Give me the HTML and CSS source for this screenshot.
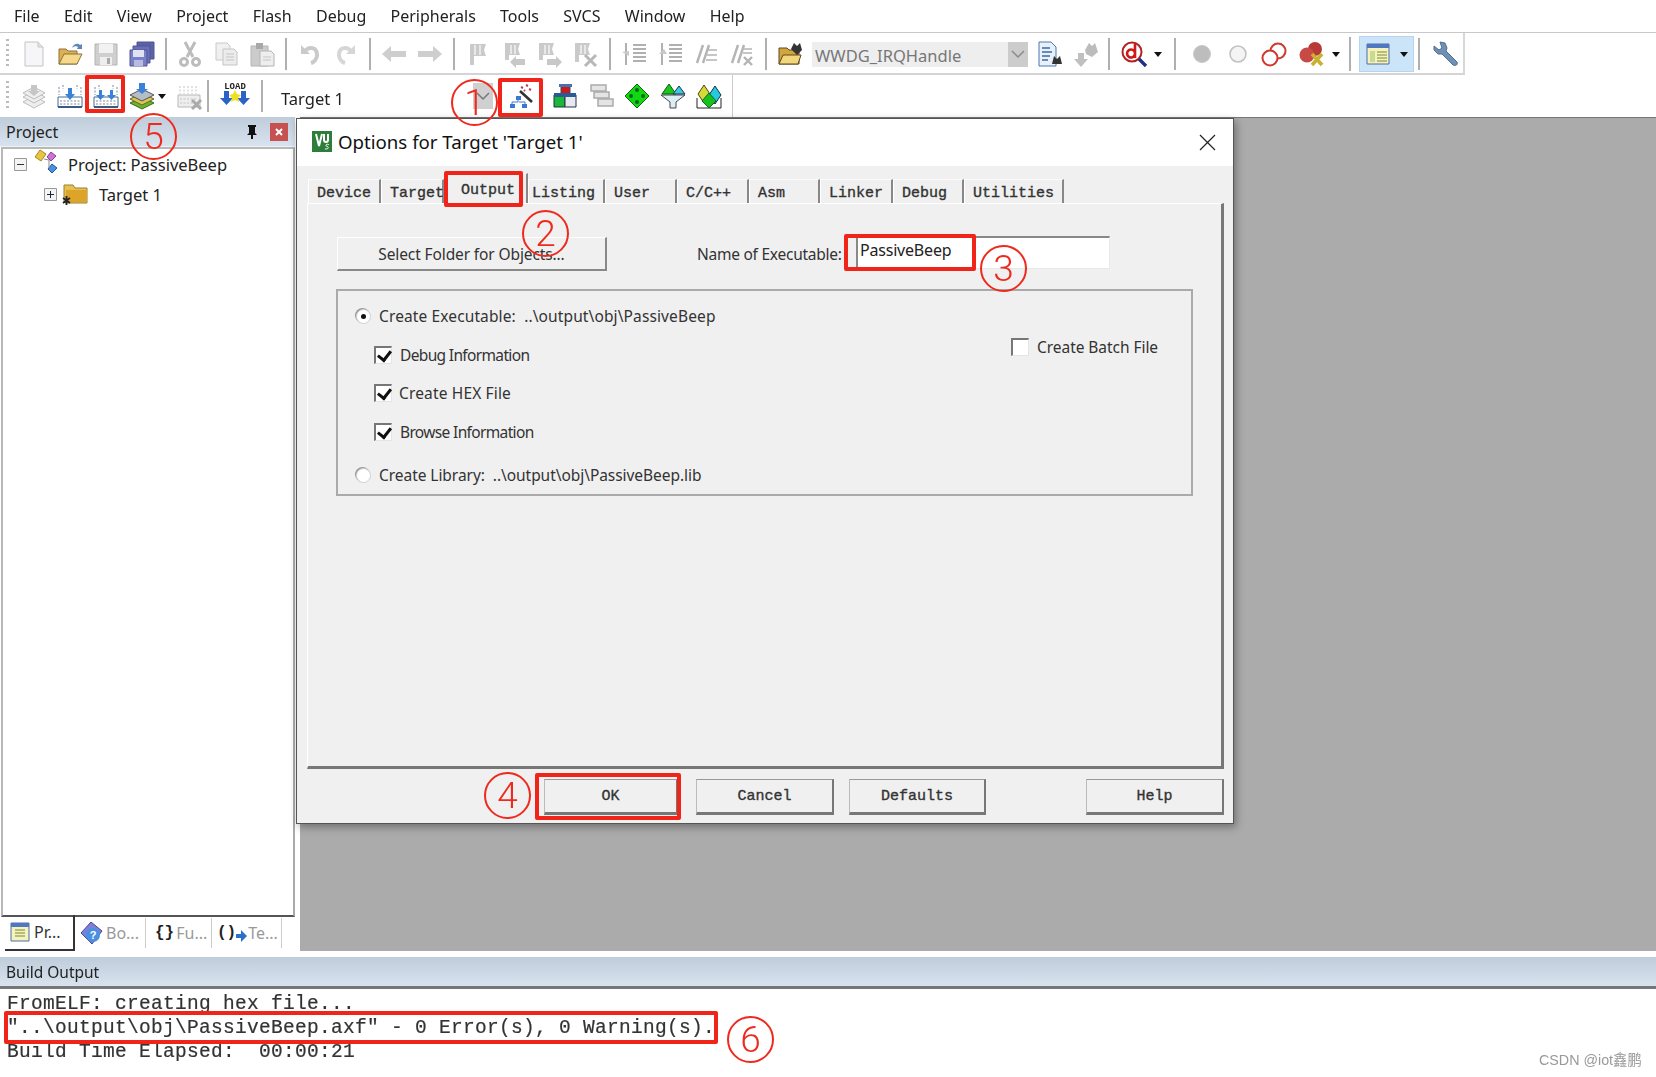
FILE: index.html
```html
<!DOCTYPE html>
<html lang="en">
<head>
<meta charset="utf-8">
<title>Options for Target</title>
<link rel="stylesheet" href="styles.css">
</head>
<body>
<div class="app">
  <nav class="menubar">
    <span class="mi">File</span><span class="mi">Edit</span><span class="mi">View</span><span class="mi">Project</span><span class="mi">Flash</span><span class="mi">Debug</span><span class="mi">Peripherals</span><span class="mi">Tools</span><span class="mi">SVCS</span><span class="mi">Window</span><span class="mi">Help</span>
  </nav>

  <div class="tb tb1">
    <i class="grip"></i>
    <span class="ic"><svg width="28" height="28"><path d="M5 2h13l5 5v19H5z" fill="#f6f6f8" stroke="#c4c4c8"/><path d="M18 2v5h5" fill="#e4e4e8" stroke="#c4c4c8"/></svg></span>
    <span class="ic"><svg width="28" height="28"><path d="M3 24V9h7l2 2h9v13z" fill="#e0b050" stroke="#8a7040"/><path d="M3 24l5-10h18l-5 10z" fill="#f6d88a" stroke="#8a7040"/><path d="M16 8c2-5 6-5 8-3l2-1v5h-5l1-2c-1-1-4-1-6 1z" fill="#5f86b8"/></svg></span>
    <span class="ic"><svg width="28" height="28"><path d="M3 4h22v21H3z" fill="#cfcfcf" stroke="#b4b4b4"/><path d="M7 4h14v9H7z" fill="#f2f2f2"/><path d="M8 17h12v8H8z" fill="#eee"/><path d="M15 18h3v6h-3z" fill="#aaa"/></svg></span>
    <span class="ic"><svg width="28" height="28"><path d="M9 2h17v17H9z" fill="#5c62a8" stroke="#50558f"/><path d="M5 6h17v17H5z" fill="#6a70b8" stroke="#50558f"/><path d="M2 10h17v16H2z" fill="#7a80c8" stroke="#50558f"/><path d="M5 10h11v7H5z" fill="#dfe2f4"/><path d="M6 20h9v6H6z" fill="#b8bce0"/></svg></span>
    <i class="sep"></i>
    <span class="ic"><svg width="28" height="28" fill="none" stroke="#bcbcbc" stroke-width="3"><path d="M9 2l8 15M19 2l-8 15"/><circle cx="8" cy="22" r="3.5"/><circle cx="20" cy="22" r="3.5"/></svg></span>
    <span class="ic"><svg width="28" height="28"><path d="M4 3h11l3 3v14H4z" fill="#f0f0f0" stroke="#c8c8c8"/><path d="M11 9h11l3 3v13H11z" fill="#ececec" stroke="#c4c4c4"/><path d="M14 14h8M14 17h8M14 20h8" stroke="#c4c4c4"/></svg></span>
    <span class="ic"><svg width="28" height="28"><path d="M3 6h17v20H3z" fill="#ccc" stroke="#b4b4b4"/><path d="M8 3h7v6H8z" fill="#a8a8a8"/><path d="M12 11h11l3 3v12H12z" fill="#eee" stroke="#b4b4b4"/><path d="M15 17h8M15 20h8" stroke="#c4c4c4"/></svg></span>
    <i class="sep"></i>
    <span class="ic"><svg width="28" height="28" fill="none" stroke="#cacaca" stroke-width="4"><path d="M9 11c4-5 12-4 12 4 0 4-3 7-6 8"/><path d="M5 5v9h9" stroke-width="0" fill="#cacaca"/></svg></span>
    <span class="ic"><svg width="28" height="28" fill="none" stroke="#d6d6d6" stroke-width="4"><path d="M19 11c-4-5-12-4-12 4 0 4 3 7 6 8"/><path d="M23 5v9h-9" stroke-width="0" fill="#d6d6d6"/></svg></span>
    <i class="sep"></i>
    <span class="ic"><svg width="28" height="28"><path d="M2 14l9-8v5h15v6H11v5z" fill="#cecece"/></svg></span>
    <span class="ic"><svg width="28" height="28"><path d="M26 14l-9-8v5H2v6h15v5z" fill="#cecece"/></svg></span>
    <i class="sep"></i>
    <span class="ic"><svg width="28" height="28"><path d="M6 4h16l-2 6 2 6H10v9H6z" fill="#cacaca"/><path d="M10 5h2v10h-2zM15 5h2v10h-2z" fill="#e8e8e8"/></svg></span>
    <span class="ic"><svg width="28" height="28"><path d="M5 3h15l-2 6 2 6H9v5H5z" fill="#cacaca"/><path d="M10 5h2v9h-2zM14 5h2v9h-2z" fill="#e8e8e8"/><path d="M10 22l6-6v3h9v6h-9v3z" fill="#c8c8c8"/></svg></span>
    <span class="ic"><svg width="28" height="28"><path d="M3 3h15l-2 6 2 6H7v5H3z" fill="#cacaca"/><path d="M8 5h2v9H8zM12 5h2v9h-2z" fill="#e8e8e8"/><path d="M26 22l-6-6v3h-9v6h9v3z" fill="#c8c8c8"/></svg></span>
    <span class="ic"><svg width="28" height="28"><path d="M3 3h15l-2 6 2 6H7v7H3z" fill="#cacaca"/><path d="M8 5h2v9H8zM12 5h2v9h-2z" fill="#e8e8e8"/><path d="M13 15l11 11M24 15L13 26" stroke="#b8b8b8" stroke-width="3"/></svg></span>
    <i class="sep"></i>
    <span class="ic"><svg width="28" height="28" stroke="#b0b0b0" stroke-width="2"><path d="M13 5h13M13 9h13M13 13h13M13 17h13M13 21h13M6 25V3" fill="none"/><path d="M2 12l7-1v5z" fill="#c8c8c8" stroke="none"/></svg></span>
    <span class="ic"><svg width="28" height="28" stroke="#b0b0b0" stroke-width="2"><path d="M13 5h13M13 9h13M13 13h13M13 17h13M13 21h13M6 25V3" fill="none"/><path d="M11 14H3l5-5z" fill="#c8c8c8" stroke="none"/></svg></span>
    <span class="ic"><svg width="28" height="28" stroke="#b4b4b4" fill="none"><path d="M5 23L11 5M11 23L17 5" stroke-width="2.4"/><path d="M16 10h9M15 15h10M14 20h11" stroke-width="1.6"/></svg></span>
    <span class="ic"><svg width="28" height="28" stroke="#b4b4b4" fill="none"><path d="M4 23L10 5M10 23L16 5" stroke-width="2.4"/><path d="M16 9h8M15 13h9" stroke-width="1.6"/><path d="M16 17l8 8M24 17l-8 8" stroke-width="2.4"/></svg></span>
    <i class="sep"></i>
    <span class="ic"><svg width="28" height="28"><path d="M3 24V8h8l2 2h10v14z" fill="#d2a63c" stroke="#5c4a20"/><path d="M3 24l4-9h18l-3 9z" fill="#f2d67c" stroke="#5c4a20"/><path d="M15 9l3-6 3 3 3-3 2 7-5 5z" fill="#333"/></svg></span>
    <span class="combo1"><span class="combo-text">WWDG_IRQHandle</span><span class="combo-btn"><svg width="16" height="10"><path d="M2 2l6 6 6-6" fill="none" stroke="#8a8a8a" stroke-width="1.5"/></svg></span></span>
    <span class="ic ic-doc"><svg width="28" height="28"><path d="M3 2h12l5 5v19H3z" fill="#e8f0fa" stroke="#4a78b0"/><path d="M6 8h8M6 12h10M6 16h8M6 20h6" stroke="#3a6aa8" stroke-width="1.5"/><path d="M16 24l2-8 3 3 3-3 2 8z" fill="#333"/></svg></span>
    <span class="ic"><svg width="28" height="28"><path d="M6 13h6v6h4l-7 8-7-8h4z" fill="#c0c0c0"/><path d="M13 10l4-7 3 3 3-3 3 9-6 5-6-3z" fill="#bcbcbc"/></svg></span>
    <i class="sep sep-n"></i>
    <span class="ic ic-d"><svg width="28" height="28"><circle cx="12" cy="12" r="9.5" fill="#fff" stroke="#b22222" stroke-width="2"/><path d="M15 4v14M15 13a4 4 0 1 0 0 1" fill="none" stroke="#d01818" stroke-width="2.6"/><path d="M19 19l7 7" stroke="#20308a" stroke-width="3.4"/></svg></span>
    <i class="dd dd-d"></i>
    <i class="sep sep-n"></i>
    <span class="ic ic-c1"><svg width="28" height="28"><circle cx="14" cy="14" r="8.5" fill="#bdbdbd" stroke="#c8c8c8"/></svg></span>
    <span class="ic"><svg width="28" height="28"><circle cx="14" cy="14" r="8" fill="#f4f4f4" stroke="#c2c2c2" stroke-width="1.6"/></svg></span>
    <span class="ic"><svg width="28" height="28"><circle cx="18" cy="11" r="7.5" fill="#fff" stroke="#cf3a30" stroke-width="2"/><circle cx="10" cy="18" r="7.5" fill="#fff" stroke="#cf3a30" stroke-width="2"/></svg></span>
    <span class="ic ic-x"><svg width="28" height="28"><circle cx="17" cy="9" r="7" fill="#b83a36"/><circle cx="9" cy="15" r="7.5" fill="#c84a44"/><path d="M14 14l10 11M24 14L14 25" stroke="#c8b030" stroke-width="3.6"/></svg></span>
    <i class="dd dd-x"></i>
    <i class="sep sep-h"></i>
    <span class="sel"><svg width="28" height="28"><path d="M3 4h22v20H3z" fill="#f6f2c0" stroke="#4b6fa5"/><path d="M3 4h22v4H3z" fill="#4f78c0"/><path d="M6 11h5v11H6z" fill="#c8dc90"/><path d="M13 12h10M13 15h10M13 18h10M13 21h10" stroke="#7a8a30"/></svg><i class="dd dd-s"></i></span>
    <i class="sep sep-l"></i>
    <span class="ic"><svg width="28" height="28"><path d="M8 2l5 1 2 5-1 3 11 11c1 3-1 4-4 3L10 14l-4 0-4-4V6l5 4 3-2z" fill="#6f8fb5" stroke="#4f6f96"/></svg></span>
  </div>

  <div class="tb tb2">
    <i class="grip"></i>
    <span class="ic"><svg width="28" height="28" fill="#eee" stroke="#bcbcbc"><path d="M3 20l11-6 11 6-11 6z"/><path d="M3 15l11-6 11 6-11 6z"/><path d="M3 11l11-6 11 6-11 6z"/><path d="M11 3h6v6h3l-6 5-6-5h3z" fill="#c6c6c6" stroke="none"/></svg></span>
    <span class="ic"><svg width="28" height="28"><use href="#dl"/><path d="M12 6h4v6h3l-5 6-5-6h3z" fill="#3a82d8"/></svg></span>
    <span class="ic"><svg width="28" height="28"><use href="#dl"/><path d="M7 8h3v5h3l-4.500 5-4.500-5h3zM18 8h3v5h3l-4.500 5-4.500-5h3z" fill="#3a82d8"/></svg></span>
    <span class="ic"><svg width="28" height="28"><path d="M2 21l12-6 12 6-12 6z" fill="#6cb030" stroke="#3c6a1a"/><path d="M2 17l12-6 12 6-12 6z" fill="#d8c850" stroke="#6a6420"/><path d="M2 13l12-6 12 6-12 6z" fill="#b8bcc4" stroke="#555"/><path d="M11 1h6v6h3l-6 5-6-5h3z" fill="#3a82d8"/></svg></span>
    <i class="dd dd-l"></i>
    <span class="ic ic-g"><svg width="28" height="28"><path d="M3 13h22v12H3z" fill="#eee" stroke="#b8b8b8"/><path d="M5 4v8M9 4v8M13 4v8M17 4v8M21 4v8M5 17h17M5 21h17" stroke="#c4c4c4" stroke-dasharray="2 1.5"/><path d="M17 18l9 9M26 18l-9 9" stroke="#aaa" stroke-width="3"/></svg></span>
    <i class="sep sep-n"></i>
    <span class="ic ic-load"><svg width="32" height="30"><text x="16" y="8" class="loadtxt">LOAD</text><path d="M5 10h5v7h4l-6.500 7-6.500-7h4zM22 10h5v7h4l-6.500 7-6.500-7h4z" fill="#2a62c8"/><path d="M16 9l2 4 4 1-3 3 1 4-4-2-4 2 1-4-3-3 4-1z" fill="#f0e020"/></svg></span>
    <i class="sep sep-n"></i>
    <span class="target">Target 1</span>
    <span class="combo2"><svg width="16" height="10"><path d="M2 2l6 6 6-6" fill="none" stroke="#777" stroke-width="1.5"/></svg></span>
    <span class="ic ic-w"><svg width="28" height="28"><path d="M14 9l12 11" stroke="#333" stroke-width="2.600"/><path d="M15 5l2 1M20 3l2 1M23 7l2 1M18 8l1 1" stroke="#c03850" stroke-width="2"/><path d="M10 14h5v4h-5zM4 22h5v4H4zM16 22h5v4h-5z" fill="#3a78d0"/><path d="M12 18v2H6v2M13 20h6v2" stroke="#3a78d0" fill="none"/></svg></span>
    <span class="ic ic-b"><svg width="28" height="28"><path d="M10 3h9v11h-9z" fill="#cc1818" stroke="#355"/><path d="M8 2h13v3H8z" fill="#4a6fb0"/><path d="M3 13h11v12H3z" fill="#18b838" stroke="#234"/><path d="M14 13h11v12H14z" fill="#e8e8f0" stroke="#234"/><path d="M3 11h22v4H3z" fill="#2a5a9a"/></svg></span>
    <span class="ic"><svg width="28" height="28" fill="#e4e4e4" stroke="#aaa" stroke-width="1.5"><path d="M4 3h15v6H4z"/><path d="M7 10h15v6H7z"/><path d="M11 17h15v7H11z"/></svg></span>
    <span class="ic"><svg width="28" height="28"><path d="M14 2l12 12-12 12L2 14z" fill="#12d812" stroke="#0a6a0a"/><g fill="#062"><circle cx="14" cy="8" r="2"/><circle cx="14" cy="20" r="2"/><circle cx="8" cy="14" r="2"/><circle cx="20" cy="14" r="2"/></g></svg></span>
    <span class="ic"><svg width="28" height="28"><path d="M2 13h24l-9 7v6h-6v-6z" fill="#dceef2" stroke="#445"/><path d="M10 2l7 10H3z" fill="#18c818" stroke="#0a5a0a"/><path d="M20 4l6 8H14z" fill="#40c8d8" stroke="#135"/></svg></span>
    <span class="ic"><svg width="28" height="28"><path d="M2 16v10h24V16" fill="#fff" stroke="#222"/><path d="M9 3l6 9-6 9-6-9z" fill="#d8d838" stroke="#454a10"/><path d="M20 4l6 9-6 9-6-9z" fill="#28c8e0" stroke="#134"/><path d="M14 11l7 8-7 7-7-7z" fill="#18c018" stroke="#063"/></svg></span>
    <i class="sep sep-end"></i>
  </div>

  <div class="main">
    <aside class="side">
      <div class="pane-head"><span>Project</span>
        <svg class="pin" width="14" height="16"><path d="M3 1h8v2h-1v6l2 2H2l2-2V3H3zM6 11h2v4H6z" fill="#111"/></svg>
        <span class="closex"><svg width="12" height="12"><path d="M3 3l6 6M9 3l-6 6" stroke="#fff" stroke-width="2"/></svg></span>
      </div>
      <div class="tree">
        <div class="row r1">
          <svg class="tw" width="13" height="13"><path d="M.5.500h12v12H.500z" fill="#f4f4f4" stroke="#999"/><path d="M3 6.500h7" stroke="#333"/></svg>
          <svg class="prj" width="26" height="26"><path d="M1 9l5-7 6 4-5 7z" fill="#e8c440" stroke="#a88820"/><path d="M17 4l5 4-5 5-4-4z" fill="#d070d8" stroke="#804890"/><path d="M18 16l5 4-5 5-4-4z" fill="#4a90e0" stroke="#245a98"/><path d="M10 11l5 1v8" fill="none" stroke="#888"/></svg>
          <span>Project: PassiveBeep</span>
        </div>
        <div class="row r2">
          <svg class="tw" width="13" height="13"><path d="M.5.500h12v12H.500z" fill="#f4f4f4" stroke="#999"/><path d="M3 6.500h7M6.500 3v7" stroke="#224"/></svg>
          <svg class="fld" width="27" height="22"><path d="M2 19V2h9l2 3h12v15H4z" fill="#e8c050" stroke="#9a8030"/><path d="M4 7h21v12H4z" fill="#dca52a"/><path d="M1 15l7 5M8 15l-7 5M4.500 13v9" stroke="#222" stroke-width="1.800"/></svg>
          <span>Target 1</span>
        </div>
      </div>
      <div class="ptabs">
        <span class="ptab on"><svg width="22" height="22"><path d="M2 2h18v18H2z" fill="#f6f2c0" stroke="#4b6fa5"/><path d="M2 2h18v4H2z" fill="#4f78c0"/><path d="M6 9h10M6 12h10M6 15h10" stroke="#7a8a30"/></svg>Pr...</span>
        <span class="ptab t2"><svg width="26" height="26"><path d="M3 13L13 2l11 9-10 13z" fill="#7c80d8" stroke="#4448a0"/><circle cx="15" cy="15" r="7" fill="#4a90e0"/><text x="15" y="19" class="q">?</text></svg>Bo...</span>
        <span class="ptab t3"><b>{}</b>Fu...</span>
        <span class="ptab t4"><b>()</b><svg width="12" height="20"><path d="M0 11h5V7l6 6-6 6v-4H0z" fill="#2a70c8"/></svg>Te...</span>
      </div>
    </aside>
    <div class="mdi">
      <section class="dialog">
        <header class="dtitle">
          <svg class="vlogo" width="22" height="23"><path d="M1 1h20v21H1z" fill="#2e7d3a"/><path d="M5 4l3 12 3-12M13 4v6a2 2 0 0 0 4 0V4" fill="none" stroke="#fff" stroke-width="2"/><path d="M14 19c3 0 4-1 3-2s-3-1-2-2 2-1 3 0" fill="none" stroke="#fff"/></svg>
          <span class="dt">Options for Target 'Target 1'</span>
          <svg class="dx" width="17" height="17"><path d="M1 1l15 15M16 1L1 16" stroke="#222" stroke-width="1.200"/></svg>
        </header>
        <div class="tabs">
          <span class="tab w1">Device</span><span class="tab w2">Target</span><span class="tab w3 on">Output</span><span class="tab w4">Listing</span><span class="tab w5">User</span><span class="tab w6">C/C++</span><span class="tab w7">Asm</span><span class="tab w8">Linker</span><span class="tab w9">Debug</span><span class="tab w10">Utilities</span>
        </div>
        <div class="panel">
          <div class="toprow">
            <span class="btn-flat">Select Folder for Objects...</span>
            <span class="lbl nameof">Name of Executable:</span>
            <span class="input">PassiveBeep</span>
          </div>
          <div class="group">
            <div class="opts">
              <div class="opt"><i class="radio sel-r"></i><span class="lbl wide">Create Executable:&nbsp; ..\output\obj\PassiveBeep</span></div>
              <div class="opt sub"><i class="chk on"></i><span class="lbl info">Debug Information</span></div>
              <div class="opt sub"><i class="chk on"></i><span class="lbl hex">Create HEX File</span></div>
              <div class="opt sub"><i class="chk on"></i><span class="lbl info">Browse Information</span></div>
              <div class="opt lib"><i class="radio"></i><span class="lbl libl">Create Library:&nbsp; ..\output\obj\PassiveBeep.lib</span></div>
            </div>
            <div class="batch"><i class="chk"></i><span class="lbl">Create Batch File</span></div>
          </div>
        </div>
        <footer class="dfoot">
          <span class="btn b-ok">OK</span><span class="btn b-c">Cancel</span><span class="btn b-d">Defaults</span><span class="btn b-h">Help</span>
        </footer>
      </section>
    </div>
  </div>

  <section class="build">
    <div class="pane-head bh">Build Output</div>
    <pre class="log">FromELF: creating hex file...
"..\output\obj\PassiveBeep.axf" - 0 Error(s), 0 Warning(s).
Build Time Elapsed:  00:00:21</pre>
  </section>
</div>

<div class="marks">
  <i class="rbox x1"></i><i class="rbox x2"></i><i class="rbox x3"></i><i class="rbox x4"></i><i class="rbox x5"></i><i class="rbox x6"></i>
  <span class="num n1">1</span><span class="num n2">2</span><span class="num n3">3</span><span class="num n4">4</span><span class="num n5">5</span><span class="num n6">6</span>
  <span class="wm">CSDN @iot鑫鹏</span>
</div>

<svg class="defs" width="0" height="0"><defs><g id="dl"><path d="M2 15h24v10H2z" fill="#fff" stroke="#4a6a90"/><path d="M2 25h24" stroke="#3a5a80" stroke-width="2"/><path d="M3 5v8M25 5v8M7 3v4M21 3v4M4 19h20M4 22h20" stroke="#7a8aa0" stroke-dasharray="2 1.500"/></g></defs></svg>
</body>
</html>
```
FILE: styles.css
```css
* { box-sizing: border-box; }
html, body { margin: 0; padding: 0; }
body { width: 1656px; height: 1077px; overflow: hidden; background: #fff; position: relative; font-family: "Noto Sans", "Liberation Sans", sans-serif; color: #222; }
i { display: block; font-style: normal; }
.defs { position: absolute; }
.app { width: 1656px; height: 1077px; display: flex; flex-direction: column; filter: blur(0.45px); }

.menubar { height: 33px; display: flex; align-items: center; padding: 0 0 0 14px; font-size: 16px; border-bottom: 1px solid #c8c8c8; }
.mi { margin-right: 24.300px; }

.tb { display: flex; align-items: center; padding-left: 16px; position: relative; background: #fff; flex: none; }
.tb1 { width: 1465px; height: 42px; padding-top: 2px; border-right: 2px solid #d8d8d8; border-bottom: 2px solid #d4d4d4; }
.tb2 { width: 733px; height: 42px; }
.grip { position: absolute; left: 6px; top: 6px; bottom: 6px; width: 3px; background: repeating-linear-gradient(#bbb 0 2px, transparent 2px 5px); }
.ic { width: 36px; height: 32px; display: flex; align-items: center; justify-content: center; flex: none; }
.sep { width: 2px; height: 32px; background: #b0b0b0; margin: 0 5px; flex: none; }
.sep-n { margin: 0 4px; }
.sep-h { margin: 0 8px 0 9px; height: 34px; }
.sep-l { margin: 0 8px 0 4px; }
.sep-end { margin: 0 0 0 auto; height: 42px; background: #ccc; width: 1px; }
.dd { width: 0; height: 0; border-left: 4px solid transparent; border-right: 4px solid transparent; border-top: 5px solid #111; flex: none; }
.dd-x { margin-left: 2px; }
.combo1 { width: 216px; height: 25px; margin-left: 4px; background: #eee; display: flex; justify-content: space-between; align-items: center; color: #777; font-size: 16.500px; flex: none; padding-left: 3px; }
.combo-text { padding-top: 2px; }
.combo-btn { width: 20px; height: 25px; background: #ccc; display: flex; align-items: center; justify-content: center; }
.ic-doc { margin-left: 4px; }
.ic-d { width: 36px; margin-left: 2px; }
.dd-d { margin: 0 8px 0 2px; }
.ic-c1 { margin-left: 4px; }
.ic-x { margin-left: 2px; }
.sel { width: 55px; height: 36px; background: #cce4f7; border: 1px solid #b4d6f2; display: flex; align-items: center; gap: 8px; padding-left: 4px; flex: none; }
.dd-l { margin-left: -2px; margin-right: 9px; }
.ic-g { width: 28px; }
.ic-load { width: 40px; margin: 0 2px; }
.loadtxt { font-family: "Liberation Mono", monospace; font-size: 9px; font-weight: 700; text-anchor: middle; fill: #222; }
.target { font-size: 16.500px; margin-left: 14px; width: 192px; padding-top: 5px; }
.combo2 { width: 20px; height: 26px; background: #d0d0d0; display: flex; align-items: center; justify-content: center; flex: none; }
.ic-w { margin-left: 5px; width: 44px; }
.ic-b { margin-left: 5px; }

.main { flex: 1; min-height: 0; display: flex; position: relative; background: #fff; }
.side { width: 300px; display: flex; flex-direction: column; flex: none; padding-right: 5px; }
.pane-head { height: 30px; background: linear-gradient(#bfccda, #d8e3ef); display: flex; align-items: center; padding-left: 6px; font-size: 16px; border-bottom: 1px solid #eef2f7; flex: none; }
.pin { margin-left: auto; margin-right: 11px; }
.closex { width: 18px; height: 18px; background: #c75050; display: flex; align-items: center; justify-content: center; margin-right: 7px; }
.tree { flex: 1; border: 2px solid #b8b8b8; border-right-color: #aaa; border-bottom-color: #555; padding-top: 0; font-size: 16.500px; margin-left: 1px; margin-bottom: -2px; }
.row { display: flex; align-items: center; height: 30px; }
.r1 .tw { margin-left: 11px; }
.prj { margin: -6px 8px 0 7px; }
.r2 .tw { margin-left: 41px; }
.fld { margin: 0 10px 0 5px; }
.ptabs { height: 36px; display: flex; align-items: center; font-size: 16px; color: #999; flex: none; }
.ptab { display: flex; align-items: center; height: 30px; padding-right: 6px; border-right: 1px solid #ccc; }
.ptab svg { flex: none; }
.ptab.on { margin-left: 5px; width: 70px; height: 36px; color: #333; padding-left: 4px; gap: 3px; border: 2px solid #333; border-width: 0 2px 2px 0; }
.t2 { width: 71px; padding-left: 3px; gap: 2px; }
.t3 { width: 66px; padding-left: 9px; gap: 2px; }
.t4 { width: 70px; padding-left: 5px; }
.ptab b { color: #222; font-weight: 700; font-family: "Liberation Mono", monospace; }
.q { font: 700 11px "Liberation Sans", sans-serif; text-anchor: middle; fill: #fff; }

.mdi { flex: 1; background: #ababab; border-top: 1px solid #777; height: 834px; }
.dialog { position: absolute; left: 296px; top: 1px; width: 938px; height: 706px; background: #f0f0f0; border: 1px solid #555; box-shadow: 2px 3px 8px rgba(0,0,0,.35); display: flex; flex-direction: column; }
.dtitle { height: 47px; background: #fff; display: flex; align-items: center; padding: 0 0 2px 14px; flex: none; }
.dt { margin-left: 5px; font-size: 18.650px; color: #111; }
.dx { margin-left: auto; margin-right: 17px; margin-top: 2px; }
.tabs { height: 37px; display: flex; align-items: flex-end; padding-left: 11px; flex: none; }
.tab { height: 24px; padding: 4px 0 0 8px; font: 15px/20px "Liberation Mono", monospace; -webkit-text-stroke: .35px #333; color: #333; border-top: 1px solid #fafafa; border-left: 1px solid #fff; border-right: 2px solid #888; flex: none; }
.tab.on { height: 30px; padding: 7px 0 0 16px; background: #f0f0f0; }
.w1 { width: 73px; } .w2 { width: 63px; } .w3 { width: 84px; } .w4 { width: 77px; padding-left: 3px; } .w5 { width: 72px; } .w6 { width: 72px; } .w7 { width: 71px; } .w8 { width: 73px; } .w9 { width: 71px; } .w10 { width: 100px; }
.panel { width: 917px; height: 566px; margin-left: 10px; background: #f0f0f0; border: 1px solid #fff; border-width: 1px 0 0 1px; border-right: 3px solid #777; border-bottom: 3px solid #777; padding: 33px 0 0 29px; flex: none; }
.toprow { display: flex; align-items: center; height: 34px; }
.btn-flat { width: 270px; height: 34px; background: #f0f0f0; border: 1px solid #fff; border-right: 2px solid #888; border-bottom: 2px solid #888; display: flex; align-items: center; justify-content: center; font-size: 15.500px; letter-spacing: -.12px; color: #333; flex: none; }
.lbl { font-size: 15.500px; letter-spacing: -.25px; color: #333; white-space: nowrap; }
.wide { letter-spacing: .12px; }
.libl { letter-spacing: -.05px; }
.info { letter-spacing: -.65px; }
.nameof { margin-left: 90px; width: 159px; }
.input { width: 254px; height: 33px; margin-top: -3px; background: #fff; border-top: 2px solid #888; border-left: 2px solid #888; border-right: 1px solid #e8e8e8; border-bottom: 1px solid #e8e8e8; font-size: 16px; letter-spacing: -.2px; padding-left: 2px; line-height: 24px; color: #222; flex: none; }
.group { width: 857px; height: 207px; margin: 18px 0 0 -1px; border: 2px solid #aaa; background: #f0f0f0; display: flex; padding-top: 6px; }
.opts { width: 673px; flex: none; }
.opt { height: 38.500px; display: flex; align-items: center; padding-left: 18px; gap: 8px; }
.sub { padding-left: 36px; gap: 8px; }
.hex { margin-left: -1px; letter-spacing: .15px; }
.lib { margin-top: 5px; }
.radio { width: 15px; height: 15px; border-radius: 50%; background: #fff; border: 1px solid #d0d0d0; box-shadow: -1px -1px 0 #999; position: relative; flex: none; }
.sel-r::after { content: ""; position: absolute; left: 4px; top: 4px; width: 5px; height: 5px; border-radius: 50%; background: #111; }
.chk { width: 18px; height: 18px; background: #fff; border-top: 2px solid #777; border-left: 2px solid #777; border-right: 1px solid #e4e4e4; border-bottom: 1px solid #e4e4e4; position: relative; flex: none; }
.chk.on::after { content: ""; position: absolute; left: 4px; top: 0; width: 6px; height: 10px; border: solid #111; border-width: 0 3px 3px 0; transform: rotate(38deg); }
.batch { display: flex; align-items: center; gap: 8px; margin-top: 40px; height: 20px; }
.batch .lbl { letter-spacing: -.05px; }

.dfoot { flex: 1; display: flex; align-items: flex-start; padding: 10px 0 0 247px; }
.btn { height: 36px; background: #f0f0f0; border: 1px solid #bbb; border-top-color: #999; border-right: 2px solid #777; border-bottom: 3px solid #777; font: 15px/34px "Liberation Mono", monospace; -webkit-text-stroke: .35px #333; color: #333; text-align: center; flex: none; }
.b-ok { width: 134px; } .b-c { width: 138px; margin-left: 18px; } .b-d { width: 137px; margin-left: 15px; } .b-h { width: 138px; margin-left: 100px; }

.build { height: 126px; flex: none; padding-top: 6px; }
.bh { height: 32px; border-bottom: 3px solid #777; font-size: 15.500px; padding-top: 0; }
.log { margin: 0; padding: 4px 0 0 7px; font: 19.500px/23.800px "Liberation Mono", monospace; letter-spacing: .3px; color: #333; -webkit-text-stroke: .2px #333; }

.marks { position: absolute; inset: 0; }
.rbox { position: absolute; border: 4px solid #f02418; border-radius: 2px; }
.x1 { left: 498px; top: 78px; width: 45px; height: 39px; }
.x2 { left: 444px; top: 171px; width: 79px; height: 36px; }
.x3 { left: 844px; top: 234px; width: 132px; height: 37px; }
.x4 { left: 535px; top: 773px; width: 146px; height: 47px; }
.x5 { left: 85px; top: 75px; width: 40px; height: 38px; }
.x6 { left: 4px; top: 1011px; width: 714px; height: 33px; }
.num { position: absolute; width: 47px; height: 47px; border: 2px solid #ee2a1e; border-radius: 50%; color: #ee2a1e; font: 300 37px/43px Roboto, sans-serif; text-align: center; }
.n1 { left: 451px; top: 79px; }
.n2 { left: 522px; top: 210px; }
.n3 { left: 980px; top: 245px; }
.n4 { left: 484px; top: 772px; }
.n5 { left: 130px; top: 113px; }
.n6 { left: 727px; top: 1016px; }
.wm { position: absolute; left: 1539px; top: 1051px; font: 14.300px/18px "Liberation Sans", "Noto Sans CJK SC", sans-serif; color: #999; }
```
